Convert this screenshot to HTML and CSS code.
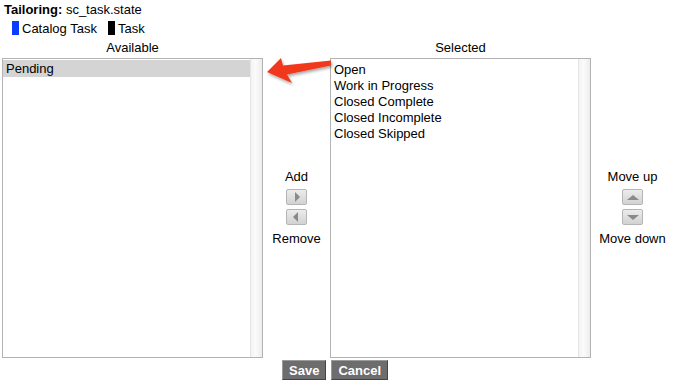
FILE: index.html
```html
<!DOCTYPE html>
<html>
<head>
<meta charset="utf-8">
<link rel="stylesheet" href="styles.css">
</head>
<body>
<div class="page">
  <div class="title"><b>Tailoring:</b> sc_task.state</div>
  <div class="legend">
    <span class="swatch blue"></span><span class="legend-label">Catalog Task</span>
    <span class="swatch black"></span><span class="legend-label">Task</span>
  </div>
  <div class="slush">
    <div class="col-label">Available</div>
    <div></div>
    <div class="col-label">Selected</div>
    <div></div>

    <div class="listbox">
      <div class="items">
        <div class="item selected">Pending</div>
      </div>
      <div class="track"></div>
    </div>
    <div class="ctrl">
      <div class="ctrl-label">Add</div>
      <button class="arrow-btn" aria-label="Add"><span class="tri right"></span></button>
      <button class="arrow-btn" aria-label="Remove"><span class="tri left"></span></button>
      <div class="ctrl-label">Remove</div>
    </div>
    <div class="listbox">
      <div class="items selected-list">
        <div class="item">Open</div>
        <div class="item">Work in Progress</div>
        <div class="item">Closed Complete</div>
        <div class="item">Closed Incomplete</div>
        <div class="item">Closed Skipped</div>
      </div>
      <div class="track"></div>
    </div>
    <div class="ctrl">
      <div class="ctrl-label">Move up</div>
      <button class="arrow-btn" aria-label="Move up"><span class="tri up"></span></button>
      <button class="arrow-btn" aria-label="Move down"><span class="tri down"></span></button>
      <div class="ctrl-label">Move down</div>
    </div>
  </div>
  <div class="actions">
    <button class="btn">Save</button>
    <button class="btn">Cancel</button>
  </div>
  <svg class="pointer" width="72" height="38" viewBox="0 0 72 38">
    <defs>
      <filter id="sh" x="-20%" y="-30%" width="140%" height="170%">
        <feDropShadow dx="1" dy="2" stdDeviation="1.5" flood-color="#000" flood-opacity="0.35"/>
      </filter>
    </defs>
    <path d="M2 18 L16 4 L18 11.5 L66 6.5 L66 11.5 L22 20.5 L27 29 Z" fill="#f2381c" filter="url(#sh)"/>
  </svg>
</div>
</body>
</html>
```

FILE: styles.css
```css
* { box-sizing: border-box; }
html, body { margin: 0; padding: 0; background: #fff; }
body {
  font-family: "Liberation Sans", Arial, Helvetica, sans-serif;
  font-size: 13px;
  color: #000;
}
.page {
  position: relative;
  width: 673px;
  height: 390px;
  padding: 2px 0 0 2px;
}
.title {
  line-height: 16px;
  padding-left: 2px;
}
.legend {
  display: flex;
  align-items: center;
  height: 18px;
  padding-left: 10px;
  margin-top: 1px;
}
.swatch {
  display: inline-block;
  width: 7px;
  height: 14px;
  margin-right: 3px;
}
.swatch.blue { background: #0a3cff; }
.swatch.black { background: #000; }
.legend-label { margin-right: 11px; }
.slush {
  display: grid;
  grid-template-columns: 261px 67px 261px 83px;
  grid-template-rows: 19px 300px;
  margin-top: 2px;
}
.col-label {
  text-align: center;
  line-height: 16px;
  padding-top: 1px;
}
.listbox {
  border: 1px solid #b3b3b3;
  display: flex;
  background: #fff;
}
.items {
  flex: 1;
  padding-top: 1px;
}
.items.selected-list { padding-top: 3px; }
.item {
  line-height: 16px;
  height: 16px;
  padding-left: 3px;
  white-space: nowrap;
}
.item.selected {
  background: #d4d4d4;
  height: 17px;
  line-height: 18px;
}
.track {
  width: 12px;
  border-left: 1px solid #e6e6e6;
  background: linear-gradient(to right, #f3f3f3, #fbfbfb 40%, #f4f4f4 70%, #ececec);
}
.ctrl {
  display: flex;
  flex-direction: column;
  align-items: center;
  justify-content: center;
}
.ctrl-label {
  line-height: 16px;
}
.ctrl-label:first-child { margin-bottom: 4px; }
.ctrl-label:last-child { margin-top: 6px; }
.arrow-btn {
  width: 21px;
  height: 16px;
  margin: 0;
  padding: 0;
  border: 1px solid #b5b5b5;
  border-radius: 2px;
  background: linear-gradient(#ececec, #d2d2d2);
  display: flex;
  align-items: center;
  justify-content: center;
}
.arrow-btn + .arrow-btn { margin-top: 4px; }
.tri { width: 0; height: 0; display: block; }
.tri.right { border-left: 5px solid #8a8a8a; border-top: 5px solid transparent; border-bottom: 5px solid transparent; margin-left: 2px; }
.tri.left { border-right: 5px solid #8a8a8a; border-top: 5px solid transparent; border-bottom: 5px solid transparent; margin-right: 2px; }
.tri.up { border-bottom: 5px solid #8a8a8a; border-left: 6px solid transparent; border-right: 6px solid transparent; }
.tri.down { border-top: 5px solid #8a8a8a; border-left: 6px solid transparent; border-right: 6px solid transparent; }
.actions {
  display: flex;
  gap: 5px;
  padding-left: 280px;
  margin-top: 2px;
}
.btn {
  font-family: "Liberation Sans", Arial, Helvetica, sans-serif;
  font-size: 13px;
  font-weight: bold;
  color: #fff;
  background: #6d6d6d;
  border: 1px solid #9a9a9a;
  border-right-color: #444;
  border-bottom-color: #444;
  height: 20px;
  padding: 0 6px;
  line-height: 17px;
}
.pointer {
  position: absolute;
  left: 265px;
  top: 54px;
}
```
